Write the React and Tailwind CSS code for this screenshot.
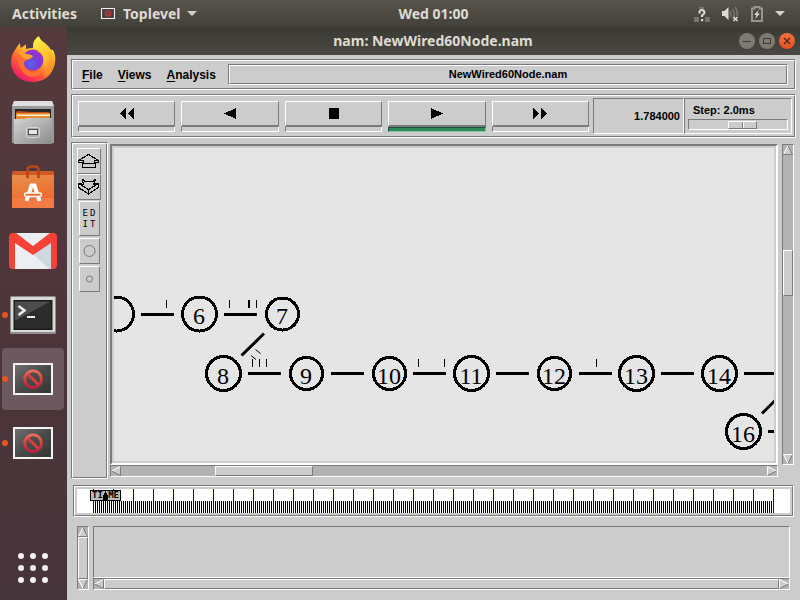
import React from "react";

const SUNKEN = "border border-t-[#7a7a7a] border-l-[#7a7a7a] border-b-white border-r-white";
const RAISED = "border border-t-white border-l-white border-b-[#7a7a7a] border-r-[#7a7a7a]";

function Groove({ className = "", innerClass = "", children }) {
  return (
    <div className={`${SUNKEN} ${className}`}>
      <div className={`${RAISED} h-full w-full ${innerClass}`}>{children}</div>
    </div>
  );
}

/* ---------- Top bar ---------- */

function Forbidden({ className }) {
  return (
    <svg viewBox="0 0 40 32" className={className} aria-hidden="true">
      <defs>
        <linearGradient id="screenFill" x1="0" y1="0" x2="1" y2="1">
          <stop offset="0" stopColor="#6e6e6e" />
          <stop offset="0.5" stopColor="#4a4a4a" />
          <stop offset="1" stopColor="#353535" />
        </linearGradient>
        <linearGradient id="signFill" x1="0" y1="0" x2="0" y2="1">
          <stop offset="0" stopColor="#f0745c" />
          <stop offset="0.6" stopColor="#d8343c" />
          <stop offset="1" stopColor="#c41c3c" />
        </linearGradient>
      </defs>
      <rect width="40" height="32" fill="#f4f4f4" />
      <rect x="2" y="2" width="36" height="28" fill="url(#screenFill)" />
      <path
        fillRule="evenodd"
        fill="url(#signFill)"
        d="M20 6.500a9.700 9.700 0 1 0 .01 0ZM20 9.300a6.900 6.900 0 1 1-.01 0Z"
      />
      <path d="M15 11.200l10 10" stroke="#dc3c40" strokeWidth="2.800" />
    </svg>
  );
}

function TopBar() {
  return (
    <header className="grid h-[27px] grid-cols-[1fr_auto_1fr] items-center bg-linear-to-b from-[#57544c] to-[#42403a] px-3 font-['Noto_Sans',sans-serif] text-sm font-bold text-[#dfdbd2]">
      <div className="flex items-center gap-6">
        <button>Activities</button>
        <button className="flex items-center">
          <svg viewBox="0 0 14 11" className="mr-2 h-[11px] w-[14px]" aria-hidden="true">
            <rect x=".5" y=".5" width="13" height="10" fill="#444" stroke="#f2f2f2" />
            <circle cx="7" cy="5.500" r="2.500" fill="none" stroke="#d8343c" strokeWidth="1.200" />
            <path d="M5.200 3.700l3.600 3.600" stroke="#d8343c" />
          </svg>
          Toplevel
          <svg viewBox="0 0 10 5" className="ml-1.5 h-[5px] w-[10px]" aria-hidden="true">
            <path d="M0 0h10L5 5z" fill="#d5d1c9" />
          </svg>
        </button>
      </div>
      <button className="pl-[67px]">Wed 01:00</button>
      <button aria-label="System menu" className="flex items-center justify-self-end pr-[3px]">
        <svg viewBox="0 0 16 16" className="mr-3 size-4" aria-hidden="true">
          <path d="M0 11h5v5H0zM11 11h5v5h-5zM5 1h5v2H5z" fill="#77746c" />
          <path d="M5.500 7.500V5.500Q6 4 8 4t2.500 2.500Q10.500 8 8 9.500V11" fill="none" stroke="#dfdbd2" strokeWidth="2" />
          <rect x="7" y="13" width="2.200" height="2.200" fill="#dfdbd2" />
        </svg>
        <svg viewBox="0 0 17 16" className="mr-3 h-4 w-[17px]" aria-hidden="true">
          <path d="M0 5h2.500L6.500 1v13l-4-4H0z" fill="#dfdbd2" />
          <path d="M8 5q2 3 0 6M10.500 3q3.500 5 0 10M13 1q3 4 2 9" fill="none" stroke="#77746c" strokeWidth="1.600" />
          <path d="M11.500 11l4 4M15.500 11l-4 4" stroke="#dfdbd2" strokeWidth="1.600" />
        </svg>
        <svg viewBox="0 0 12 16" className="mr-3 h-4 w-3" aria-hidden="true">
          <path d="M1 2.500h2.500V1h5v1.500H11V15H1z" fill="none" stroke="#98958c" strokeWidth="2" />
          <path d="M7.500 4L3 9h2.500L4 13l5-5.500H6.500z" fill="#dfdbd2" />
        </svg>
        <svg viewBox="0 0 10 5" className="h-[5px] w-[10px]" aria-hidden="true">
          <path d="M0 0h10L5 5z" fill="#d5d1c9" />
        </svg>
      </button>
    </header>
  );
}

/* ---------- Dock ---------- */

function FirefoxIcon() {
  return (
    <svg viewBox="0 0 46 46" className="size-[46px]" aria-hidden="true">
      <defs>
        <linearGradient id="fxBody" x1="0.85" y1="0.1" x2="0.2" y2="0.95">
          <stop offset="0" stopColor="#fff04a" />
          <stop offset="0.35" stopColor="#ffb429" />
          <stop offset="0.65" stopColor="#ff5a36" />
          <stop offset="1" stopColor="#f0126c" />
        </linearGradient>
        <linearGradient id="fxTail" x1="0" y1="0" x2="0.4" y2="1">
          <stop offset="0" stopColor="#fff44f" />
          <stop offset="0.6" stopColor="#ffc62f" />
          <stop offset="1" stopColor="#ff8a2a" />
        </linearGradient>
        <radialGradient id="fxGlobe" cx="0.4" cy="0.7" r="0.7">
          <stop offset="0" stopColor="#5a5ff0" />
          <stop offset="0.6" stopColor="#7a3ad0" />
          <stop offset="1" stopColor="#a32fd0" />
        </radialGradient>
      </defs>
      <path
        d="M5 14Q7 10 10 7L10.500 12L16 8.500L16 13Q20 11.500 25 12L43 14Q46 20 45 26Q42 45 23 46Q3 45 1 27Q1 19 5 14Z"
        fill="url(#fxBody)"
      />
      <path d="M23 12Q22 4 29 0Q30 4 35 7Q45 15 45 27Q43 37 34 40Q41 27 32 17Q29 13 23 12Z" fill="url(#fxTail)" />
      <circle cx="23" cy="24" r="10.500" fill="url(#fxGlobe)" />
      <path d="M7 17Q11 15 15 18Q19 18 23 20Q22 22 18 24Q14 24 14 28Q15 34 22 36Q29 37 34 32Q31 41 21 41Q8 38 7 17Z" fill="#ff6f30" />
      <path d="M8 16Q12 15 16 18Q20 18 23 20Q21 23 17 23Q12 22 8 16Z" fill="#ffa52b" />
      <path d="M27 15Q34 18 34 27Q37 18 28 14Z" fill="#ffb92c" />
    </svg>
  );
}

function FilesIcon() {
  return (
    <svg viewBox="0 0 42 44" className="h-[44px] w-[42px]" aria-hidden="true">
      <defs>
        <linearGradient id="cabinet" x1="0" y1="0" x2="1" y2="1">
          <stop offset="0" stopColor="#d4d4d4" />
          <stop offset="1" stopColor="#8b8b8b" />
        </linearGradient>
      </defs>
      <path d="M2 0h38l2 6v36H0V6z" fill="#9a9a9a" />
      <path d="M2 0h38l2 5H0z" fill="#dedede" />
      <rect x="3" y="8" width="36" height="12" fill="#252525" />
      <path d="M5 10l15 1h17v8H4v-7z" fill="#c14f1c" />
      <path d="M4 12h34v7H4z" fill="#e98b2d" />
      <path d="M5 13.500h33v1.500H5z" fill="#fff1d6" />
      <path d="M2 18h11l1-1h25l1 1v25H2z" fill="url(#cabinet)" />
      <rect x="14.500" y="26.500" width="13" height="10" rx="2" fill="#a8a8a8" stroke="#d8d8d8" />
      <rect x="16.500" y="28.500" width="9" height="5" fill="#e8e8e8" stroke="#4e4e4e" />
    </svg>
  );
}

function SoftwareIcon() {
  return (
    <svg viewBox="0 0 42 44" className="h-[44px] w-[42px]" aria-hidden="true">
      <defs>
        <linearGradient id="bag" x1="0" y1="0" x2="0.3" y2="1">
          <stop offset="0" stopColor="#e59550" />
          <stop offset="1" stopColor="#f2652a" />
        </linearGradient>
      </defs>
      <path d="M1 6h40l1 4v33H0V10z" fill="url(#bag)" />
      <path d="M1 6h40l1 4H0z" fill="#d25a22" />
      <rect y="33" width="42" height="10" fill="#f27a43" />
      <path d="M15.500 13V5q0-3.500 3.500-3.500h4q3.500 0 3.500 3.500v8" fill="none" stroke="#b9441a" strokeWidth="2.600" />
      <path d="M14.500 36L19.500 20.500H22.500L27.500 36" fill="none" stroke="#fff" strokeWidth="4" />
      <rect x="12.500" y="28" width="17" height="3.500" rx="1.700" fill="#f26a30" stroke="#fff" strokeWidth="1.400" />
    </svg>
  );
}

function MailIcon() {
  return (
    <svg viewBox="0 0 48 36" className="h-[36px] w-[48px]" aria-hidden="true">
      <path d="M5 0h38v36H5z" fill="#eceff1" />
      <path d="M24 21l16 15h3V8z" fill="#cfd8dc" />
      <path d="M6 36V0H4Q0 0 0 4v28q0 4 4 4zM42 36h2q4 0 4-4V4q0-4-4-4h-2z" fill="#f44336" />
      <path d="M3 0h4l17 13L41 0h4v8L24 22 3 8z" fill="#f44336" />
    </svg>
  );
}

function TerminalIcon() {
  return (
    <svg viewBox="0 0 46 38" className="h-[38px] w-[46px]" aria-hidden="true">
      <rect width="46" height="38" rx="1.500" fill="#8d8d8d" />
      <rect x="1" y="1" width="44" height="35" fill="#d8d8d8" />
      <rect x="3.500" y="4" width="39" height="30" fill="#1b1b1b" />
      <path d="M5 5.500h36L5 25z" fill="#4d4d4d" />
      <path d="M41 5.500v27H5V25z" fill="#2c2c2c" />
      <path d="M8.500 10l6 4.500-6 4.500" fill="none" stroke="#eee" strokeWidth="2.500" />
      <rect x="17" y="20" width="8" height="2" fill="#eee" />
    </svg>
  );
}

function DockItem({ label, running, active, children }) {
  return (
    <button aria-label={label} className="relative flex h-16 w-full items-center justify-center">
      {active && <span className="absolute inset-x-0.5 inset-y-px mr-px rounded-[4px] bg-[#6c5960]" />}
      {running && <span className="absolute left-0.5 size-[6px] rounded-full bg-[#e95420]" />}
      <span className="relative mr-px">{children}</span>
    </button>
  );
}

function Dock() {
  return (
    <aside className="flex w-[67px] shrink-0 flex-col bg-linear-to-b from-[#543a3c] via-[#4d353a] to-[#45343a]">
      <DockItem label="Firefox"><FirefoxIcon /></DockItem>
      <DockItem label="Files"><FilesIcon /></DockItem>
      <DockItem label="Software"><SoftwareIcon /></DockItem>
      <DockItem label="Mail"><MailIcon /></DockItem>
      <DockItem label="Terminal" running><TerminalIcon /></DockItem>
      <DockItem label="Toplevel" running active><Forbidden className="h-8 w-10" /></DockItem>
      <DockItem label="Nam console" running><Forbidden className="h-8 w-10" /></DockItem>
      <div className="mt-auto">
        <DockItem label="Show applications">
          <span className="grid grid-cols-3 gap-[6px]">
            {Array.from({ length: 9 }, (_, i) => (
              <span key={i} className="size-[6px] rounded-full bg-[#f2f0f0]" />
            ))}
          </span>
        </DockItem>
      </div>
    </aside>
  );
}

/* ---------- Window chrome ---------- */

function TitleBar() {
  const round = "flex size-4 items-center justify-center rounded-full";
  return (
    <div className="grid h-7 grid-cols-[1fr_auto_1fr] items-center bg-linear-to-b from-[#3b3a35] to-[#4a4842] pr-[5px] font-['Noto_Sans',sans-serif] text-sm font-bold text-[#dfdbd2]">
      <span />
      <h1 className="pl-1">nam: NewWired60Node.nam</h1>
      <div className="flex gap-1 justify-self-end">
        <button aria-label="Minimize" className={`${round} bg-[#7d7a72]`}>
          <svg viewBox="0 0 16 16" className="size-4"><path d="M4 8.500h8" stroke="#3b3a35" /></svg>
        </button>
        <button aria-label="Maximize" className={`${round} bg-[#7d7a72]`}>
          <svg viewBox="0 0 16 16" className="size-4"><rect x="4.500" y="5.500" width="7" height="5" fill="none" stroke="#3b3a35" /></svg>
        </button>
        <button aria-label="Close" className={`${round} bg-linear-to-b from-[#f4703f] to-[#e2501f]`}>
          <svg viewBox="0 0 16 16" className="size-4"><path d="M5 5l6 6M11 5l-6 6" stroke="#4a2a1c" strokeWidth="1.300" /></svg>
        </button>
      </div>
    </div>
  );
}

function MenuBar() {
  return (
    <Groove innerClass="flex items-center p-[3px] pr-[6px]">
      <nav className="flex w-[152px] shrink-0 gap-[15px] pl-[6px] text-[12px]">
        {["File", "Views", "Analysis"].map((name) => (
          <button key={name}>
            <span className="underline underline-offset-2">{name[0]}</span>
            {name.slice(1)}
          </button>
        ))}
      </nav>
      <Groove className="h-[21px] grow" innerClass="flex items-center justify-center">
        NewWired60Node.nam
      </Groove>
    </Groove>
  );
}

const CONTROLS = [
  { name: "Rewind", d: "M8 0v11L2 5.500zM16 0v11l-6-5.500z" },
  { name: "Play backward", d: "M15 0v11L3 5.500z" },
  { name: "Stop", d: "M4 0h10v11H4z" },
  { name: "Play", d: "M3 0v11l12-5.500z", on: true },
  { name: "Fast forward", d: "M2 0v11l6-5.500zM10 0v11l6-5.500z" },
];

function ControlBar() {
  return (
    <Groove innerClass="flex items-center gap-1 p-[2px]">
      <div className="flex grow gap-[6px] pl-[3px]">
        {CONTROLS.map(({ name, d, on }) => (
          <div key={name} className="flex-1">
            <button aria-label={name} className={`${RAISED} flex h-[26px] w-full items-center justify-center border-b-2`}>
              <svg viewBox="0 0 18 11" className="h-[11px] w-[18px]" shapeRendering="crispEdges">
                <path d={d} />
              </svg>
            </button>
            <div
              className={
                on
                  ? "h-[5px] border border-t-[#1c5435] border-r-[#8fc7a6] border-b-[#8fc7a6] border-l-[#1c5435] bg-[#2e8b57]"
                  : "h-[5px] border border-t-0 border-r-white border-b-white border-l-[#7a7a7a]"
              }
            />
          </div>
        ))}
      </div>
      <div className="flex h-9">
        <output aria-label="Time" className={`${SUNKEN} flex w-[91px] items-center justify-end pr-[3px]`}>
          1.784000
        </output>
        <div className={`${SUNKEN} flex w-[108px] flex-col justify-between px-[3px] pt-[3px] pb-[3px]`}>
          <label htmlFor="step" className="pl-[5px] leading-4">Step: 2.0ms</label>
          <input
            id="step"
            type="range"
            min="0"
            max="100"
            defaultValue="56"
            className="block h-[11px] w-full appearance-none border border-t-[#7a7a7a] border-r-white border-b-white border-l-[#7a7a7a] bg-[#cccccc] [&::-webkit-slider-thumb]:h-[8px] [&::-webkit-slider-thumb]:w-[29px] [&::-webkit-slider-thumb]:appearance-none [&::-webkit-slider-thumb]:border [&::-webkit-slider-thumb]:border-t-white [&::-webkit-slider-thumb]:border-r-[#7a7a7a] [&::-webkit-slider-thumb]:border-b-[#7a7a7a] [&::-webkit-slider-thumb]:border-l-white [&::-webkit-slider-thumb]:bg-[linear-gradient(90deg,#ccc_13px,#7a7a7a_13px,#7a7a7a_14px,#fff_14px,#fff_15px,#ccc_15px)]"
          />
        </div>
      </div>
    </Groove>
  );
}

/* ---------- Left tools ---------- */

function Tools() {
  return (
    <Groove className="w-[37px] shrink-0" innerClass="flex flex-col items-center pt-1 pr-px">
      <button aria-label="Zoom in" className={`${RAISED} flex h-[26px] w-6 items-center justify-center`}>
        <svg viewBox="0 0 22 16" className="h-4 w-[22px]" fill="none" stroke="#000" strokeWidth="1.200" shapeRendering="crispEdges">
          <path d="M10.500 1.500L.5 7.500V9.500H4.500V14.500H17.500V9.500H20.500V7.500Z" />
          <path d="M.5 7.500H5.500V10.500H16.500V7.500H20.500" />
        </svg>
      </button>
      <button aria-label="Zoom out" className={`${RAISED} flex h-[26px] w-6 items-center justify-center`}>
        <svg viewBox="0 0 22 16" className="h-4 w-[22px]" fill="none" stroke="#000" strokeWidth="1.200" shapeRendering="crispEdges">
          <path d="M4.500 .5L7.500 2.500H14.500L17.500 .5L15.500 5.500L20.500 4.500L10.500 10.500L.5 4.500L5.500 5.500Z" />
          <path d="M.5 4.500V8.500L10.500 15L20.500 8.500V4.500M10.500 10.500V15" />
        </svg>
      </button>
      <button
        aria-label="Edit"
        className={`${RAISED} mt-px grid h-[35px] w-[21px] grid-cols-2 content-center justify-items-center px-0.5 font-['DejaVu_Sans_Mono',monospace] text-[9px] leading-[11px] font-normal`}
      >
        <span>E</span><span>D</span><span>I</span><span>T</span>
      </button>
      <button aria-label="Larger nodes" className={`${RAISED} mt-0.5 flex h-[26px] w-[21px] items-center justify-center`}>
        <svg viewBox="0 0 13 13" className="size-[13px]"><circle cx="6.500" cy="6" r="5.500" fill="none" stroke="#777" /></svg>
      </button>
      <button aria-label="Smaller nodes" className={`${RAISED} mt-0.5 flex h-[26px] w-[21px] items-center justify-center`}>
        <svg viewBox="0 0 13 13" className="size-[13px]"><circle cx="6.500" cy="6" r="3" fill="none" stroke="#777" /></svg>
      </button>
    </Groove>
  );
}

/* ---------- Scroll bars ---------- */

const ARROWS = {
  up: { fill: "M5 0L10 10H0z", light: "M.5 9.500L5 .5", dark: "M5 .5L9.500 9.500H0" },
  down: { fill: "M0 0H10L5 10z", light: "M10 .5H.5L5 9.500", dark: "M9.500 .5L5 9.500" },
  left: { fill: "M0 5L10 0V10z", light: "M.5 5L9.500 .5", dark: "M9.500 .5V9.500L.5 5" },
  right: { fill: "M0 0L10 5L0 10z", light: "M.5 10V.5L9.500 5", dark: "M9.500 5L.5 9.500" },
};

function Arrow({ dir }) {
  const a = ARROWS[dir];
  return (
    <button aria-label={`Scroll ${dir}`} className="size-[10px] shrink-0">
      <svg viewBox="0 0 10 10" className="size-[10px]" fill="none">
        <path d={a.fill} fill="#cccccc" />
        <path d={a.light} stroke="#fff" />
        <path d={a.dark} stroke="#7a7a7a" />
      </svg>
    </button>
  );
}

function ScrollBar({ vertical, before, thumb, after, className = "" }) {
  return (
    <div className={`${SUNKEN} flex shrink-0 bg-[#b3b3b3] ${vertical ? "w-3 flex-col" : "h-3"} ${className}`}>
      <Arrow dir={vertical ? "up" : "left"} />
      <div className={before} />
      <div className={`${RAISED} bg-[#cccccc] ${thumb}`} />
      <div className={after} />
      <Arrow dir={vertical ? "down" : "right"} />
    </div>
  );
}

/* ---------- Network canvas ---------- */

const NODES = [
  { x: 2.5, y: 166, r: 17 },
  { x: 85.5, y: 166, r: 17, id: 6 },
  { x: 168.5, y: 166, r: 16, id: 7 },
  { x: 109.5, y: 225.5, r: 17, id: 8 },
  { x: 192.5, y: 225.5, r: 16, id: 9 },
  { x: 275.5, y: 225.5, r: 16, id: 10 },
  { x: 357.5, y: 225.5, r: 17, id: 11 },
  { x: 440.5, y: 225.5, r: 16, id: 12 },
  { x: 522.5, y: 225.5, r: 17, id: 13 },
  { x: 605.5, y: 225.5, r: 17, id: 14 },
  { x: 629.5, y: 283.5, r: 17, id: 16 },
];

const LINKS =
  "M27 166.500h33M110 166.500h33M134 225.500h33M217 225.500h33M299 225.500h33M382 225.500h33M465 225.500h33M547 225.500h33M630 225.500h80M654 283.500h50M150 185.500L127.500 207.500M648 265.500L668 245.500";

const PACKETS =
  "M52.500 152v8M115.500 152v8M134.500 152v8M135.500 152v8M142.500 152v8M138.500 211v8M145.500 211v8M152.500 211v8M304.500 211v8M330.500 211v8M482.500 211v8M141.500 201.500l5 4M137 207.500l5 4";

function NetworkView() {
  return (
    <div className="h-[321px] border-2 border-t-[#7a7a7a] border-r-white border-b-white border-l-[#7a7a7a]">
      <div className="h-full overflow-hidden border-2 border-[#cccccc] bg-[#e5e5e5]">
        <svg className="block h-full w-full" role="img" aria-label="Network topology">
          <path d={LINKS} stroke="#000" strokeWidth="3" />
          <path d={PACKETS} stroke="#000" fill="none" />
          {NODES.map((n) => (
            <g key={n.x}>
              <circle cx={n.x} cy={n.y} r={n.r} fill="none" stroke="#000" strokeWidth="3" shapeRendering="crispEdges" />
              {n.id && (
                <text x={n.x - 0.5} y={Math.floor(n.y + 10.5)} textAnchor="middle" className="font-['Liberation_Serif',serif] text-[24px] font-normal">
                  {n.id}
                </text>
              )}
            </g>
          ))}
        </svg>
      </div>
    </div>
  );
}

/* ---------- Timeline ---------- */

function Timeline() {
  const majors = Array.from({ length: 35 }, (_, i) => 16 + i * 20);
  const minors = Array.from({ length: 340 }, (_, i) => 16 + i * 2);
  return (
    <Groove className="mr-0.5 ml-0.5" innerClass="border-0">
      <div className="border border-t-white border-r-[#7a7a7a] border-b-[#7a7a7a] border-l-white p-0.5">
        <div className="relative h-6 overflow-hidden bg-white">
          <svg className="block h-6 w-full" shapeRendering="crispEdges" aria-hidden="true">
            {minors.map((x) => (
              <rect key={x} x={x} y="12" width="1" height="12" />
            ))}
            {majors.map((x) => (
              <rect key={x} x={x} y="0" width="1" height="24" fill="#0000dd" />
            ))}
          </svg>
          <div className="absolute top-px left-[13px] flex h-[11px] w-[31px] items-center justify-between border border-black bg-[#bbbbbb] px-px font-['DejaVu_Sans_Mono',monospace] text-[9px] leading-none font-bold">
            <span>TI</span>
            <svg viewBox="0 0 5 9" className="h-[9px] w-[5px]" shapeRendering="crispEdges"><path d="M2 0h1v2h1v2h1v5H0V4h1V2h1z" /></svg>
            <span>ME</span>
          </div>
        </div>
      </div>
    </Groove>
  );
}

/* ---------- Page ---------- */

export default function App() {
  return (
    <div className="flex min-h-screen flex-col">
      <TopBar />
      <div className="flex grow">
        <Dock />
        <section className="flex min-w-0 grow flex-col bg-[#cccccc] font-['Liberation_Sans',Arial,sans-serif] text-[11px] font-bold text-black">
          <TitleBar />
          <main className="flex grow flex-col gap-1 p-1">
            <MenuBar />
            <ControlBar />
            <div className="flex gap-0.5">
              <Tools />
              <div className="flex min-w-0 grow flex-col pt-0.5 pb-0.5">
                <NetworkView />
                <ScrollBar before="grow-[94]" thumb="grow-[96]" after="grow-[454]" />
              </div>
              <ScrollBar
                vertical
                className="mt-0.5 mr-0.5 mb-[14px] ml-0.5"
                before="grow-[94]"
                thumb="grow-[44]"
                after="grow-[156]"
              />
            </div>
            <div className="pt-0.5"><Timeline /></div>
            <div className="mt-[5px] mr-[6px] mb-[6px] ml-[6px] flex grow gap-1">
              <ScrollBar vertical before="" thumb="grow" after="" />
              <div className="flex min-w-0 grow flex-col">
                <div className={`${SUNKEN} grow`} />
                <ScrollBar before="" thumb="grow" after="" />
              </div>
            </div>
          </main>
        </section>
      </div>
    </div>
  );
}
